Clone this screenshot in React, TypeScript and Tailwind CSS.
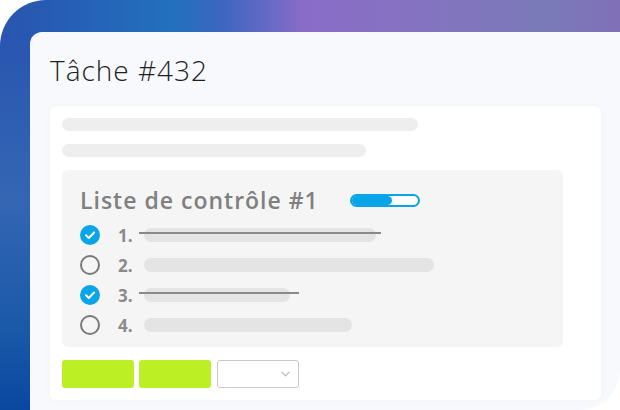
import React from 'react'

const items = [
  { n: 1, done: true, w: 232, strike: 242 },
  { n: 2, done: false, w: 290, strike: 0 },
  { n: 3, done: true, w: 146, strike: 160 },
  { n: 4, done: false, w: 208, strike: 0 },
]

function CheckCircle({ done }: { done: boolean }) {
  if (!done) {
    return <span className="w-5 h-5 rounded-full border-2 border-[#7a7a7a] shrink-0" />
  }
  return (
    <span className="w-5 h-5 rounded-full bg-[#0aa5e8] flex items-center justify-center shrink-0">
      <svg viewBox="0 0 20 20" className="w-5 h-5">
        <path d="M6 10.3l2.8 2.7 5.3-5.5" fill="none" stroke="#fff" strokeWidth="2" strokeLinecap="round" strokeLinejoin="round" />
      </svg>
    </span>
  )
}

export default function App() {
  return (
    <div className="w-[620px] h-[410px] bg-white overflow-hidden font-['Open_Sans',sans-serif]">
      {/* gradient frame */}
      <div className="h-full flex pl-[30px] pt-[32px] rounded-tl-[46px] rounded-br-[80px] bg-[linear-gradient(180deg,transparent_0px,transparent_34px,#2a58b0_60px,#3466b4_200px,#1c5aa9_320px,#0a48a0_410px),linear-gradient(90deg,#2954b0_0%,#2270be_28%,#3d66c0_36%,#6a6ac6_44%,#8a6cc8_49%,#8474c0_70%,#7a7ab8_88%,#8070b8_100%)]">
        {/* panel */}
        <div className="flex-1 bg-[#f7f9fc] rounded-tl-[12px] rounded-br-[40px] pl-5 pr-[19px] pt-[20px]">
          <h1 className="text-[28px] leading-[36px] font-light text-[#1f1f1f] tracking-[1px]">Tâche #432</h1>

          {/* card */}
          <div className="mt-[18px] bg-white rounded-[6px] shadow-[0_0_6px_rgba(0,0,0,0.03)] p-3">
            <div className="h-[13px] w-[356px] rounded-full bg-[#eeeeee]" />
            <div className="mt-[13px] h-[13px] w-[304px] rounded-full bg-[#eeeeee]" />

            {/* checklist */}
            <div className="mt-[13px] w-[501px] bg-[#f5f5f5] rounded-[6px] pl-[18px] pt-[16px] pb-[7px]">
              <div className="flex items-center h-[28px]">
                <span className="w-[270px] text-[23px] leading-[28px] font-semibold text-[#808080] tracking-[1px]">Liste de contrôle #1</span>
                <div className="w-[70px] h-[13px] rounded-full border-2 border-[#0aa5e8] bg-white">
                  <div className="w-[40px] h-full rounded-full bg-[#0aa5e8]" />
                </div>
              </div>
              <div className="mt-[6px]">
                {items.map((it) => (
                  <div key={it.n} className="flex items-center h-[30px]">
                    <CheckCircle done={it.done} />
                    <span className="ml-[18px] w-[26px] text-[17px] leading-none font-bold text-[#8a8a8a]">{it.n}.</span>
                    <div className="relative">
                      <div className="h-[14px] rounded-full bg-[#e4e4e4]" style={{ width: it.w }} />
                      {it.done && (
                        <div className="absolute left-[-5px] top-[4px] h-[2px] bg-[#8a8a8a]" style={{ width: it.strike }} />
                      )}
                    </div>
                  </div>
                ))}
              </div>
            </div>

            {/* actions */}
            <div className="mt-[13px] flex items-center gap-[5px]">
              <div className="w-[72px] h-[28px] rounded-[3px] bg-[#bcef24]" />
              <div className="w-[72px] h-[28px] rounded-[3px] bg-[#bcef24]" />
              <div className="ml-px w-[82px] h-[28px] rounded-[3px] border border-[#c9c9c9] bg-white flex items-center justify-end pr-[8px]">
                <svg viewBox="0 0 10 6" className="w-[9px] h-[6px]">
                  <path d="M1 1l4 4 4-4" fill="none" stroke="#b8b8b8" strokeWidth="1.3" strokeLinecap="round" strokeLinejoin="round" />
                </svg>
              </div>
            </div>
          </div>
        </div>
      </div>
    </div>
  )
}
